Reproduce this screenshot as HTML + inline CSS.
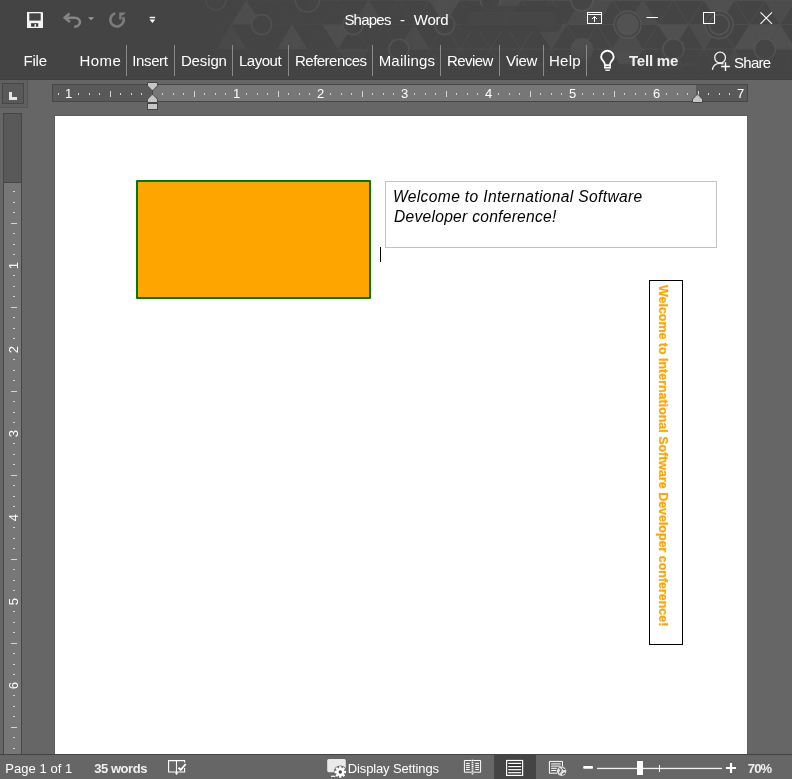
<!DOCTYPE html>
<html lang="en">
<head>
<meta charset="utf-8">
<title>Shapes - Word</title>
<style>
html,body{margin:0;padding:0}
body{width:792px;height:779px;position:relative;overflow:hidden;background:#666;font-family:"Liberation Sans",sans-serif}
#app{position:absolute;left:0;top:0;width:792px;height:779px;overflow:hidden;will-change:transform}
.abs{position:absolute}
.t{position:absolute;white-space:pre;line-height:1}
#top{left:0;top:0;width:792px;height:80px;background:#444;box-sizing:border-box;border-bottom:1px solid #3f3f3f}
#work{left:0;top:80px;width:792px;height:674px;background:#666}
#page{left:55px;top:116px;width:692px;height:638px;background:#fff;box-shadow:0 0 0 1px #5d5d5d}
#status{left:0;top:754px;width:792px;height:25px;background:#666;border-top:1px solid #434343;box-sizing:border-box}
.sep{position:absolute;top:45px;width:1px;height:31px;background:#8a8a8a}
#hr{left:52px;top:84px;width:696px;height:18px;box-sizing:border-box;border:1px solid #464646;background:#595959}
#hrl{left:152px;top:85px;width:544px;height:16px;background:#777}
#vr{left:3px;top:113px;width:19px;height:641px;box-sizing:border-box;border:1px solid #464646;border-bottom:none;background:#777}
#vrd{left:4px;top:114px;width:17px;height:68px;background:#595959;border-bottom:1px solid #464646}
#tabsel{left:0;top:80px;width:27px;height:27px;background:#606060;border-right:1px solid #555;border-bottom:1px solid #555}
#tabin{left:2px;top:83px;width:22px;height:21px;box-sizing:border-box;border:1px solid #464646;background:#595959}
#orange{left:136px;top:180px;width:235px;height:119px;box-sizing:border-box;border:2px solid #007a00;background:#ffa500;border-radius:1px}
#tb1{left:385px;top:181px;width:332px;height:67px;box-sizing:border-box;border:1px solid #c3c3c3;background:#fff}
#tb2{left:649px;top:280px;width:34px;height:365px;box-sizing:border-box;border:1px solid #000;background:#fff}
#cursor{left:380px;top:247px;width:1px;height:15px;background:#000}
#vtxt{position:absolute;left:670.1px;top:285.2px;font-size:13.7px;transform-origin:0 0;transform:rotate(90deg) scaleX(0.909);white-space:pre;color:#ffa500;font-weight:700;line-height:1;-webkit-text-stroke:0.25px #ffa500}
#sel{left:494px;top:755px;width:42px;height:24px;background:#444}
.tk{background:#d4d4d4}
.rn{position:absolute;color:#fff;font-size:13px;line-height:1;white-space:pre}
</style>
</head>
<body>
<div id="app">
<div id="top" class="abs"></div>
<svg class="abs" style="left:0;top:0" width="792" height="80" viewBox="0 0 792 80">
<defs><linearGradient id="pg" x1="0" x2="792" y1="0" y2="0" gradientUnits="userSpaceOnUse"><stop offset="0.21" stop-color="#fff" stop-opacity="0"/><stop offset="0.30" stop-color="#fff" stop-opacity="0.75"/><stop offset="0.7" stop-color="#fff" stop-opacity="1"/></linearGradient>
<linearGradient id="pv" x1="0" x2="0" y1="0" y2="80" gradientUnits="userSpaceOnUse"><stop offset="0.6" stop-color="#fff" stop-opacity="1"/><stop offset="0.92" stop-color="#fff" stop-opacity="0"/></linearGradient>
<linearGradient id="pl" x1="0" x2="792" y1="0" y2="0" gradientUnits="userSpaceOnUse"><stop offset="0.3" stop-color="#fff" stop-opacity="0.25"/><stop offset="0.68" stop-color="#fff" stop-opacity="1"/></linearGradient><mask id="pm3"><rect width="792" height="80" fill="url(#pl)"/></mask>
<mask id="pm"><rect width="792" height="80" fill="url(#pg)"/></mask><mask id="pm2"><rect width="792" height="80" fill="url(#pv)"/></mask></defs>
<g mask="url(#pm2)"><g mask="url(#pm)">
<polygon points="246.4,0.0 231.1,24.6 261.6,24.6" fill="#505050"/>
<polygon points="703.9,0.0 734.4,0.0 719.1,24.6" fill="#505050"/>
<polygon points="429.4,0.0 459.9,0.0 444.6,24.6" fill="#505050"/>
<polygon points="581.9,0.0 566.6,24.6 597.1,24.6" fill="#4c4c4c"/>
<polygon points="581.9,0.0 612.4,0.0 597.1,24.6" fill="#4c4c4c"/>
<polygon points="368.4,0.0 353.1,24.6 383.6,24.6" fill="#4c4c4c"/>
<polygon points="490.4,0.0 520.9,0.0 505.6,24.6" fill="#4c4c4c"/>
<polygon points="642.9,0.0 627.6,24.6 658.1,24.6" fill="#4c4c4c"/>
<polygon points="764.9,0.0 795.4,0.0 780.1,24.6" fill="#4c4c4c"/>
<polygon points="292.1,24.6 276.9,49.2 307.4,49.2" fill="#505050"/>
<polygon points="322.6,24.6 353.1,24.6 337.9,49.2" fill="#505050"/>
<polygon points="658.1,24.6 688.6,24.6 673.4,49.2" fill="#505050"/>
<polygon points="749.6,24.6 734.4,49.2 764.9,49.2" fill="#505050"/>
<polygon points="749.6,24.6 780.1,24.6 764.9,49.2" fill="#505050"/>
<polygon points="780.1,24.6 764.9,49.2 795.4,49.2" fill="#505050"/>
<polygon points="414.1,24.6 398.9,49.2 429.4,49.2" fill="#4c4c4c"/>
<polygon points="536.1,24.6 566.6,24.6 551.4,49.2" fill="#4c4c4c"/>
<polygon points="627.6,24.6 612.4,49.2 642.9,49.2" fill="#4c4c4c"/>
<polygon points="688.6,24.6 719.1,24.6 703.9,49.2" fill="#4c4c4c"/>
<polygon points="231.1,24.6 215.9,49.2 246.4,49.2" fill="#4c4c4c"/>
<polygon points="612.4,49.2 642.9,49.2 627.6,73.8" fill="#4c4c4c"/>
<polygon points="734.4,49.2 719.1,73.8 749.6,73.8" fill="#4c4c4c"/>
<polygon points="337.9,49.2 368.4,49.2 353.1,73.8" fill="#4c4c4c"/>
<polygon points="673.4,49.2 658.1,73.8 688.6,73.8" fill="#4c4c4c"/>
<g mask="url(#pm3)"><path d="M170 0.5H792M170 24.6H792M170 49.2H792M170 73.8H792M93.9 0L139.6 73.8M93.9 0L48.1 73.8M124.4 0L170.1 73.8M124.4 0L78.6 73.8M154.9 0L200.6 73.8M154.9 0L109.1 73.8M185.4 0L231.1 73.8M185.4 0L139.6 73.8M215.9 0L261.6 73.8M215.9 0L170.1 73.8M246.4 0L292.1 73.8M246.4 0L200.6 73.8M276.9 0L322.6 73.8M276.9 0L231.1 73.8M307.4 0L353.1 73.8M307.4 0L261.6 73.8M337.9 0L383.6 73.8M337.9 0L292.1 73.8M368.4 0L414.1 73.8M368.4 0L322.6 73.8M398.9 0L444.6 73.8M398.9 0L353.1 73.8M429.4 0L475.1 73.8M429.4 0L383.6 73.8M459.9 0L505.6 73.8M459.9 0L414.1 73.8M490.4 0L536.1 73.8M490.4 0L444.6 73.8M520.9 0L566.6 73.8M520.9 0L475.1 73.8M551.4 0L597.1 73.8M551.4 0L505.6 73.8M581.9 0L627.6 73.8M581.9 0L536.1 73.8M612.4 0L658.1 73.8M612.4 0L566.6 73.8M642.9 0L688.6 73.8M642.9 0L597.1 73.8M673.4 0L719.1 73.8M673.4 0L627.6 73.8M703.9 0L749.6 73.8M703.9 0L658.1 73.8M734.4 0L780.1 73.8M734.4 0L688.6 73.8M764.9 0L810.6 73.8M764.9 0L719.1 73.8M795.4 0L841.1 73.8M795.4 0L749.6 73.8M825.9 0L871.6 73.8M825.9 0L780.1 73.8M856.4 0L902.1 73.8M856.4 0L810.6 73.8M886.9 0L932.6 73.8M886.9 0L841.1 73.8" fill="none" stroke="#4f4f4f" stroke-width="0.9"/></g>
<circle cx="215.9" cy="0.0" r="10.0" fill="#454545" stroke="#545454" stroke-width="1.6"/>
<circle cx="261.6" cy="24.6" r="10.0" fill="#454545" stroke="#545454" stroke-width="1.6"/>
<circle cx="307.4" cy="0.0" r="12.0" fill="#454545" stroke="#545454" stroke-width="1.6"/>
<circle cx="444.6" cy="24.6" r="10.0" fill="#454545" stroke="#545454" stroke-width="1.6"/>
<circle cx="627.6" cy="24.6" r="13.5" fill="#454545" stroke="#545454" stroke-width="1.6"/>
<circle cx="627.6" cy="24.6" r="11.0" fill="#525252" stroke="#525252" stroke-width="0.1"/>
<circle cx="581.9" cy="0.0" r="11.0" fill="#454545" stroke="#545454" stroke-width="1.6"/>
<circle cx="581.9" cy="49.2" r="11.0" fill="#4f4f4f" stroke="#505050" stroke-width="1.0"/>
<circle cx="673.4" cy="49.2" r="10.5" fill="#454545" stroke="#545454" stroke-width="1.6"/>
<circle cx="719.1" cy="24.6" r="14.0" fill="#454545" stroke="#545454" stroke-width="1.6"/>
<circle cx="719.1" cy="24.6" r="10.0" fill="#454545" stroke="#545454" stroke-width="1.6"/>
<circle cx="764.9" cy="49.2" r="10.5" fill="#454545" stroke="#545454" stroke-width="1.6"/>
<circle cx="398.9" cy="49.2" r="10.0" fill="#454545" stroke="#545454" stroke-width="1.6"/>
<circle cx="353.1" cy="24.6" r="10.0" fill="#454545" stroke="#545454" stroke-width="1.6"/>
<circle cx="490.4" cy="0.0" r="10.0" fill="#454545" stroke="#545454" stroke-width="1.6"/>
<circle cx="536.1" cy="73.8" r="10.0" fill="#454545" stroke="#545454" stroke-width="1.6"/>
<circle cx="688.6" cy="73.8" r="10.0" fill="#454545" stroke="#545454" stroke-width="1.6"/>
</g></g>
<polygon points="613.5,51 641.8,51 634.2,63.7 619,63.7" fill="#4e4e4e"/>
<rect x="462" y="6" width="100" height="26" rx="8" fill="#444" opacity="0.8"/>
<rect x="468" y="12" width="88" height="13" rx="4" fill="#4b4b4b" opacity="0.4"/>
</svg>
<div id="work" class="abs"></div>
<div id="page" class="abs"></div>

<!-- tab separators -->
<div class="sep" style="left:126px"></div><div class="sep" style="left:174px"></div><div class="sep" style="left:232px"></div><div class="sep" style="left:288px"></div><div class="sep" style="left:372px"></div><div class="sep" style="left:440px"></div><div class="sep" style="left:499px"></div><div class="sep" style="left:543px"></div><div class="sep" style="left:586px"></div>

<!-- rulers -->
<div id="tabsel" class="abs"></div><div id="tabin" class="abs"></div>
<div id="hr" class="abs"></div><div id="hrl" class="abs"></div>
<div id="vr" class="abs"></div><div id="vrd" class="abs"></div>
<div class="abs tk" style="left:58px;top:93px;width:1px;height:2px"></div>
<span class="rn" style="left:58.5px;top:87.30px;width:20px;text-align:center">1</span>
<div class="abs tk" style="left:78px;top:93px;width:1px;height:2px"></div>
<div class="abs tk" style="left:89px;top:93px;width:1px;height:2px"></div>
<div class="abs tk" style="left:99px;top:93px;width:1px;height:2px"></div>
<div class="abs tk" style="left:110px;top:91px;width:1px;height:6px"></div>
<div class="abs tk" style="left:120px;top:93px;width:1px;height:2px"></div>
<div class="abs tk" style="left:131px;top:93px;width:1px;height:2px"></div>
<div class="abs tk" style="left:141px;top:93px;width:1px;height:2px"></div>
<div class="abs tk" style="left:162px;top:93px;width:1px;height:2px"></div>
<div class="abs tk" style="left:173px;top:93px;width:1px;height:2px"></div>
<div class="abs tk" style="left:183px;top:93px;width:1px;height:2px"></div>
<div class="abs tk" style="left:194px;top:91px;width:1px;height:6px"></div>
<div class="abs tk" style="left:204px;top:93px;width:1px;height:2px"></div>
<div class="abs tk" style="left:215px;top:93px;width:1px;height:2px"></div>
<div class="abs tk" style="left:225px;top:93px;width:1px;height:2px"></div>
<span class="rn" style="left:226.5px;top:87.30px;width:20px;text-align:center">1</span>
<div class="abs tk" style="left:246px;top:93px;width:1px;height:2px"></div>
<div class="abs tk" style="left:257px;top:93px;width:1px;height:2px"></div>
<div class="abs tk" style="left:267px;top:93px;width:1px;height:2px"></div>
<div class="abs tk" style="left:278px;top:91px;width:1px;height:6px"></div>
<div class="abs tk" style="left:288px;top:93px;width:1px;height:2px"></div>
<div class="abs tk" style="left:299px;top:93px;width:1px;height:2px"></div>
<div class="abs tk" style="left:309px;top:93px;width:1px;height:2px"></div>
<span class="rn" style="left:310.5px;top:87.30px;width:20px;text-align:center">2</span>
<div class="abs tk" style="left:330px;top:93px;width:1px;height:2px"></div>
<div class="abs tk" style="left:341px;top:93px;width:1px;height:2px"></div>
<div class="abs tk" style="left:351px;top:93px;width:1px;height:2px"></div>
<div class="abs tk" style="left:362px;top:91px;width:1px;height:6px"></div>
<div class="abs tk" style="left:372px;top:93px;width:1px;height:2px"></div>
<div class="abs tk" style="left:383px;top:93px;width:1px;height:2px"></div>
<div class="abs tk" style="left:393px;top:93px;width:1px;height:2px"></div>
<span class="rn" style="left:394.5px;top:87.30px;width:20px;text-align:center">3</span>
<div class="abs tk" style="left:414px;top:93px;width:1px;height:2px"></div>
<div class="abs tk" style="left:425px;top:93px;width:1px;height:2px"></div>
<div class="abs tk" style="left:435px;top:93px;width:1px;height:2px"></div>
<div class="abs tk" style="left:446px;top:91px;width:1px;height:6px"></div>
<div class="abs tk" style="left:456px;top:93px;width:1px;height:2px"></div>
<div class="abs tk" style="left:467px;top:93px;width:1px;height:2px"></div>
<div class="abs tk" style="left:477px;top:93px;width:1px;height:2px"></div>
<span class="rn" style="left:478.5px;top:87.30px;width:20px;text-align:center">4</span>
<div class="abs tk" style="left:498px;top:93px;width:1px;height:2px"></div>
<div class="abs tk" style="left:509px;top:93px;width:1px;height:2px"></div>
<div class="abs tk" style="left:519px;top:93px;width:1px;height:2px"></div>
<div class="abs tk" style="left:530px;top:91px;width:1px;height:6px"></div>
<div class="abs tk" style="left:540px;top:93px;width:1px;height:2px"></div>
<div class="abs tk" style="left:551px;top:93px;width:1px;height:2px"></div>
<div class="abs tk" style="left:561px;top:93px;width:1px;height:2px"></div>
<span class="rn" style="left:562.5px;top:87.30px;width:20px;text-align:center">5</span>
<div class="abs tk" style="left:582px;top:93px;width:1px;height:2px"></div>
<div class="abs tk" style="left:593px;top:93px;width:1px;height:2px"></div>
<div class="abs tk" style="left:603px;top:93px;width:1px;height:2px"></div>
<div class="abs tk" style="left:614px;top:91px;width:1px;height:6px"></div>
<div class="abs tk" style="left:624px;top:93px;width:1px;height:2px"></div>
<div class="abs tk" style="left:635px;top:93px;width:1px;height:2px"></div>
<div class="abs tk" style="left:645px;top:93px;width:1px;height:2px"></div>
<span class="rn" style="left:646.5px;top:87.30px;width:20px;text-align:center">6</span>
<div class="abs tk" style="left:666px;top:93px;width:1px;height:2px"></div>
<div class="abs tk" style="left:677px;top:93px;width:1px;height:2px"></div>
<div class="abs tk" style="left:687px;top:93px;width:1px;height:2px"></div>
<div class="abs tk" style="left:698px;top:91px;width:1px;height:6px"></div>
<div class="abs tk" style="left:708px;top:93px;width:1px;height:2px"></div>
<div class="abs tk" style="left:719px;top:93px;width:1px;height:2px"></div>
<div class="abs tk" style="left:729px;top:93px;width:1px;height:2px"></div>
<span class="rn" style="left:730.5px;top:87.30px;width:20px;text-align:center">7</span>
<div class="abs tk" style="left:12.9px;top:191px;width:2.4px;height:1px"></div>
<div class="abs tk" style="left:12.9px;top:202px;width:2.4px;height:1px"></div>
<div class="abs tk" style="left:12.9px;top:212px;width:2.4px;height:1px"></div>
<div class="abs tk" style="left:10.5px;top:223px;width:6px;height:1px"></div>
<div class="abs tk" style="left:12.9px;top:233px;width:2.4px;height:1px"></div>
<div class="abs tk" style="left:12.9px;top:244px;width:2.4px;height:1px"></div>
<div class="abs tk" style="left:12.9px;top:254px;width:2.4px;height:1px"></div>
<span class="rn" style="left:2.6px;top:259.00px;width:20px;height:13px;text-align:center;transform:rotate(-90deg)">1</span>
<div class="abs tk" style="left:12.9px;top:275px;width:2.4px;height:1px"></div>
<div class="abs tk" style="left:12.9px;top:286px;width:2.4px;height:1px"></div>
<div class="abs tk" style="left:12.9px;top:296px;width:2.4px;height:1px"></div>
<div class="abs tk" style="left:10.5px;top:307px;width:6px;height:1px"></div>
<div class="abs tk" style="left:12.9px;top:317px;width:2.4px;height:1px"></div>
<div class="abs tk" style="left:12.9px;top:328px;width:2.4px;height:1px"></div>
<div class="abs tk" style="left:12.9px;top:338px;width:2.4px;height:1px"></div>
<span class="rn" style="left:2.6px;top:343.00px;width:20px;height:13px;text-align:center;transform:rotate(-90deg)">2</span>
<div class="abs tk" style="left:12.9px;top:359px;width:2.4px;height:1px"></div>
<div class="abs tk" style="left:12.9px;top:370px;width:2.4px;height:1px"></div>
<div class="abs tk" style="left:12.9px;top:380px;width:2.4px;height:1px"></div>
<div class="abs tk" style="left:10.5px;top:391px;width:6px;height:1px"></div>
<div class="abs tk" style="left:12.9px;top:401px;width:2.4px;height:1px"></div>
<div class="abs tk" style="left:12.9px;top:412px;width:2.4px;height:1px"></div>
<div class="abs tk" style="left:12.9px;top:422px;width:2.4px;height:1px"></div>
<span class="rn" style="left:2.6px;top:427.00px;width:20px;height:13px;text-align:center;transform:rotate(-90deg)">3</span>
<div class="abs tk" style="left:12.9px;top:443px;width:2.4px;height:1px"></div>
<div class="abs tk" style="left:12.9px;top:454px;width:2.4px;height:1px"></div>
<div class="abs tk" style="left:12.9px;top:464px;width:2.4px;height:1px"></div>
<div class="abs tk" style="left:10.5px;top:475px;width:6px;height:1px"></div>
<div class="abs tk" style="left:12.9px;top:485px;width:2.4px;height:1px"></div>
<div class="abs tk" style="left:12.9px;top:496px;width:2.4px;height:1px"></div>
<div class="abs tk" style="left:12.9px;top:506px;width:2.4px;height:1px"></div>
<span class="rn" style="left:2.6px;top:511.00px;width:20px;height:13px;text-align:center;transform:rotate(-90deg)">4</span>
<div class="abs tk" style="left:12.9px;top:527px;width:2.4px;height:1px"></div>
<div class="abs tk" style="left:12.9px;top:538px;width:2.4px;height:1px"></div>
<div class="abs tk" style="left:12.9px;top:548px;width:2.4px;height:1px"></div>
<div class="abs tk" style="left:10.5px;top:559px;width:6px;height:1px"></div>
<div class="abs tk" style="left:12.9px;top:569px;width:2.4px;height:1px"></div>
<div class="abs tk" style="left:12.9px;top:580px;width:2.4px;height:1px"></div>
<div class="abs tk" style="left:12.9px;top:590px;width:2.4px;height:1px"></div>
<span class="rn" style="left:2.6px;top:595.00px;width:20px;height:13px;text-align:center;transform:rotate(-90deg)">5</span>
<div class="abs tk" style="left:12.9px;top:611px;width:2.4px;height:1px"></div>
<div class="abs tk" style="left:12.9px;top:622px;width:2.4px;height:1px"></div>
<div class="abs tk" style="left:12.9px;top:632px;width:2.4px;height:1px"></div>
<div class="abs tk" style="left:10.5px;top:643px;width:6px;height:1px"></div>
<div class="abs tk" style="left:12.9px;top:653px;width:2.4px;height:1px"></div>
<div class="abs tk" style="left:12.9px;top:664px;width:2.4px;height:1px"></div>
<div class="abs tk" style="left:12.9px;top:674px;width:2.4px;height:1px"></div>
<span class="rn" style="left:2.6px;top:679.00px;width:20px;height:13px;text-align:center;transform:rotate(-90deg)">6</span>
<div class="abs tk" style="left:12.9px;top:695px;width:2.4px;height:1px"></div>
<div class="abs tk" style="left:12.9px;top:706px;width:2.4px;height:1px"></div>
<div class="abs tk" style="left:12.9px;top:716px;width:2.4px;height:1px"></div>
<div class="abs tk" style="left:10.5px;top:727px;width:6px;height:1px"></div>
<div class="abs tk" style="left:12.9px;top:737px;width:2.4px;height:1px"></div>
<div class="abs tk" style="left:12.9px;top:748px;width:2.4px;height:1px"></div>

<!-- document shapes -->
<div id="orange" class="abs"></div>
<div id="tb1" class="abs"></div>
<div id="cursor" class="abs"></div>
<div id="tb2" class="abs"></div>
<div id="vtxt">Welcome to International Software Developer conference!</div>

<div id="status" class="abs"></div>
<div id="sel" class="abs"></div>

<svg class="abs" style="left:0;top:0" width="792" height="779" viewBox="0 0 792 779">
<!-- save -->
<g id="i-save">
<path d="M27 12h15.2l0.8 0.8V28H27z" fill="#f4f4f4"/>
<rect x="29.3" y="13.3" width="11.4" height="7.3" fill="#444"/>
<rect x="31.1" y="23.2" width="7.1" height="3.5" fill="#3a3a3a"/>
<rect x="34.5" y="24.2" width="1.6" height="2.5" fill="#f4f4f4"/>
</g>
<!-- undo -->
<g id="i-undo" fill="none" stroke="#858585" stroke-width="2.6">
<path d="M69.5 13.6L64.8 17.7L70 22" stroke-linejoin="miter"/>
<path d="M65.5 17.7H74.5C82 17.7 81.5 27 74.2 26.6"/>
</g>
<path d="M88 17.2h6.2l-3.1 3z" fill="#9a9a9a"/>
<!-- redo -->
<g id="i-redo" fill="none" stroke="#7c7c7c" stroke-width="2.7">
<path d="M115.3 13.3A6.7 6.7 0 1 0 123.1 17.0"/>
<path d="M119.2 12.4H125.7L123.6 15L121.5 15.6V19.5H119.2z" fill="#7c7c7c" stroke="none"/>
</g>
<!-- qat -->
<rect x="149.7" y="16.8" width="5.4" height="1.4" fill="#fff"/>
<path d="M149.6 19.6h5.6l-2.8 3.3z" fill="#fff"/>
<!-- window controls -->
<g fill="none" stroke="#fff" stroke-width="1">
<rect x="587.5" y="12.5" width="14" height="11"/>
<path d="M587.5 14.5h14"/>
<path d="M594.5 22V16.5M592 19l2.5-2.5l2.5 2.5"/>
<path d="M646.5 17.5h11.5"/>
<rect x="703.5" y="12.5" width="11" height="11"/>
<path d="M760.5 12.3L772 23.8M772 12.3L760.5 23.8" stroke-width="1.1"/>
</g>
<!-- lightbulb -->
<g fill="none" stroke="#fff">
<path d="M604.9 64.4C604.9 61.3 601.1 60.5 601.1 57.1A6.3 6.3 0 0 1 613.7 57.1C613.7 60.5 610 61.3 610 64.4" stroke-width="1.9"/>
<path d="M604.2 65.1h6.6M604.2 67.7h6.6" stroke-width="1.8"/>
<path d="M604.9 64.2v4M610.1 64.2v4" stroke-width="1.4"/>
<path d="M605.3 70.2h4.5" stroke-width="1.3"/>
</g>
<!-- person+ -->
<g fill="none" stroke="#f2f2f2" stroke-width="1.3">
<circle cx="720.1" cy="57.6" r="5.4"/>
<path d="M712.4 69.9C713 66 716 63.4 720 63.4C721.5 63.4 722.6 63.6 723.6 64"/>
<path d="M721.1 66.5h8.8M725.5 62.2v8.7" stroke="#fff" stroke-width="1.4"/>
</g>
<!-- tab selector L -->
<path d="M9 92h3v5h5v3H9z" fill="#e4e4e4"/>
<!-- indent markers -->
<g fill="#c6c6c6" stroke="#454545" stroke-width="1">
<path d="M152.5 90v5" fill="none"/>
<path d="M147.5 82.5h10v3.3l-4.4 4.6h-1.2l-4.4-4.6z"/>
<path d="M147.5 102.5v-3.3l4.4-4.6h1.2l4.4 4.6v3.3z"/>
<rect x="147.5" y="103.5" width="10" height="6"/>
<path d="M692.5 102.5v-3.3l4.4-4.6h1.2l4.4 4.6v3.3z"/>
</g>
<!-- status: proofing book -->
<g fill="none" stroke="#fff" stroke-width="1.1">
<path d="M176.5 760.6H168.6V772H176.5M176.5 760.6V774l-1-1m1 1l1-1M176.5 760.6H184.6V762.6M184.6 768V772H176.5"/>
<path d="M178.5 767.7l2.3 2.1l4.9-5.8" stroke-width="1.9"/>
</g>
<!-- status: display settings -->
<rect x="327.2" y="759" width="18.6" height="13.2" rx="1.6" fill="#e9e9e9"/>
<path d="M331 776.3h5" stroke="#f0f0f0" stroke-width="1.3"/>
<circle cx="340.3" cy="772" r="6.6" fill="#666"/>
<g stroke="#fff" stroke-width="2.3" stroke-linecap="butt">
<path d="M340.3 766.2v11.6M334.5 772h11.6M336.2 767.9l8.2 8.2M344.4 767.9l-8.2 8.2"/>
</g>
<circle cx="340.3" cy="772" r="4" fill="#fff"/>
<circle cx="340.3" cy="772" r="1.7" fill="#4a4a4a"/>
<!-- status: read mode -->
<g fill="none" stroke="#fff" stroke-width="1">
<path d="M471.6 760.5H464.4V772.2H471.6M473.4 760.5H480.6V772.2H473.4"/>
<path d="M472.5 759.8V775" stroke-width="1.8" stroke-dasharray="1.4 0.7"/>
<path d="M466 763.4h3.8M466 765.4h3.8M466 767.4h3.8M466 769.5h3.8M475.2 763.4h3.8M475.2 765.4h3.8M475.2 767.4h3.8M475.2 769.5h3.8" stroke-width="1"/>
</g>
<!-- status: print layout -->
<rect x="506.6" y="760.5" width="16" height="14.9" fill="#363636" stroke="#fff" stroke-width="1.2"/>
<g fill="#fff">
<rect x="508.2" y="762.8" width="13" height="1.2"/><rect x="508.2" y="766" width="13" height="1.2"/><rect x="508.2" y="769.1" width="13" height="1.2"/><rect x="508.2" y="772.1" width="13" height="1.2"/>
</g>
<!-- status: web layout -->
<g fill="none" stroke="#fff" stroke-width="1">
<path d="M557 773.2H549.4V761.4H562.5V766.5"/>
<path d="M551.2 763.9h9.5M551.2 766.1h9.5M551.2 768.3h5.5M551.2 770.5h5" stroke-width="1"/>
</g>
<circle cx="561.6" cy="771.3" r="4.7" fill="#e2e2e2"/>
<path d="M559 769c1.5-0.7 2.6 0.4 1.9 1.6s-1.6 1.2-1 2.8M563 767.8c-0.6 1.3 0.9 1.9 2.4 1.6M562.6 775c0.2-1.5 1.5-2 2.7-1.7" fill="none" stroke="#555" stroke-width="1.2"/>
<!-- zoom slider -->
<rect x="583.2" y="766.1" width="9.8" height="2.7" rx="0.8" fill="#fff"/>
<rect x="597" y="767.8" width="125" height="1.3" fill="#f2f2f2"/>
<rect x="659" y="765" width="1" height="7" fill="#f2f2f2"/>
<rect x="637" y="761" width="6" height="14" fill="#fff"/>
<path d="M725.9 768h10.1M731 763v10" stroke="#fff" stroke-width="2.2" fill="none"/>
</svg>

<span class="t" style="left:344.40px;top:12.00px;font-size:15px;font-weight:400;font-style:normal;color:#fff;letter-spacing:-0.775px;">Shapes</span>
<span class="t" style="left:400.00px;top:12.00px;font-size:15px;font-weight:400;font-style:normal;color:#fff;letter-spacing:0.000px;">-</span>
<span class="t" style="left:413.80px;top:12.00px;font-size:15px;font-weight:400;font-style:normal;color:#fff;letter-spacing:-0.275px;">Word</span>
<span class="t" style="left:23.50px;top:52.60px;font-size:15px;font-weight:400;font-style:normal;color:#fff;letter-spacing:-0.209px;">File</span>
<span class="t" style="left:79.50px;top:52.60px;font-size:15px;font-weight:400;font-style:normal;color:#fff;letter-spacing:0.443px;">Home</span>
<span class="t" style="left:132.30px;top:52.60px;font-size:15px;font-weight:400;font-style:normal;color:#fff;letter-spacing:-0.389px;">Insert</span>
<span class="t" style="left:180.90px;top:52.60px;font-size:15px;font-weight:400;font-style:normal;color:#fff;letter-spacing:-0.130px;">Design</span>
<span class="t" style="left:239.00px;top:52.60px;font-size:15px;font-weight:400;font-style:normal;color:#fff;letter-spacing:-0.494px;">Layout</span>
<span class="t" style="left:295.00px;top:52.60px;font-size:15px;font-weight:400;font-style:normal;color:#fff;letter-spacing:-0.523px;">References</span>
<span class="t" style="left:378.70px;top:52.60px;font-size:15px;font-weight:400;font-style:normal;color:#fff;letter-spacing:0.183px;">Mailings</span>
<span class="t" style="left:446.90px;top:52.60px;font-size:15px;font-weight:400;font-style:normal;color:#fff;letter-spacing:-0.530px;">Review</span>
<span class="t" style="left:506.00px;top:52.60px;font-size:15px;font-weight:400;font-style:normal;color:#fff;letter-spacing:-0.270px;">View</span>
<span class="t" style="left:549.00px;top:52.60px;font-size:15px;font-weight:400;font-style:normal;color:#fff;letter-spacing:0.264px;">Help</span>
<span class="t" style="left:629.00px;top:52.90px;font-size:15px;font-weight:700;font-style:normal;color:#f0f0f0;letter-spacing:-0.222px;">Tell me</span>
<span class="t" style="left:734.00px;top:54.70px;font-size:15px;font-weight:400;font-style:normal;color:#fff;letter-spacing:-0.721px;">Share</span>
<span class="t" style="left:393.00px;top:188.79px;font-size:15.6px;font-weight:400;font-style:italic;color:#000;letter-spacing:0.350px;">Welcome to International Software</span>
<span class="t" style="left:394.00px;top:208.89px;font-size:15.6px;font-weight:400;font-style:italic;color:#000;letter-spacing:0.272px;">Developer conference!</span>
<span class="t" style="left:5.30px;top:762.20px;font-size:13px;font-weight:400;font-style:normal;color:#fff;letter-spacing:0.043px;">Page 1 of 1</span>
<span class="t" style="left:94.20px;top:762.20px;font-size:13px;font-weight:700;font-style:normal;color:#f0f0f0;letter-spacing:-0.446px;">35 words</span>
<span class="t" style="left:347.80px;top:761.70px;font-size:13px;font-weight:400;font-style:normal;color:#fff;letter-spacing:-0.134px;">Display Settings</span>
<span class="t" style="left:747.70px;top:762.20px;font-size:13px;font-weight:700;font-style:normal;color:#f0f0f0;letter-spacing:-0.780px;">70%</span>
</div>
</body>
</html>
